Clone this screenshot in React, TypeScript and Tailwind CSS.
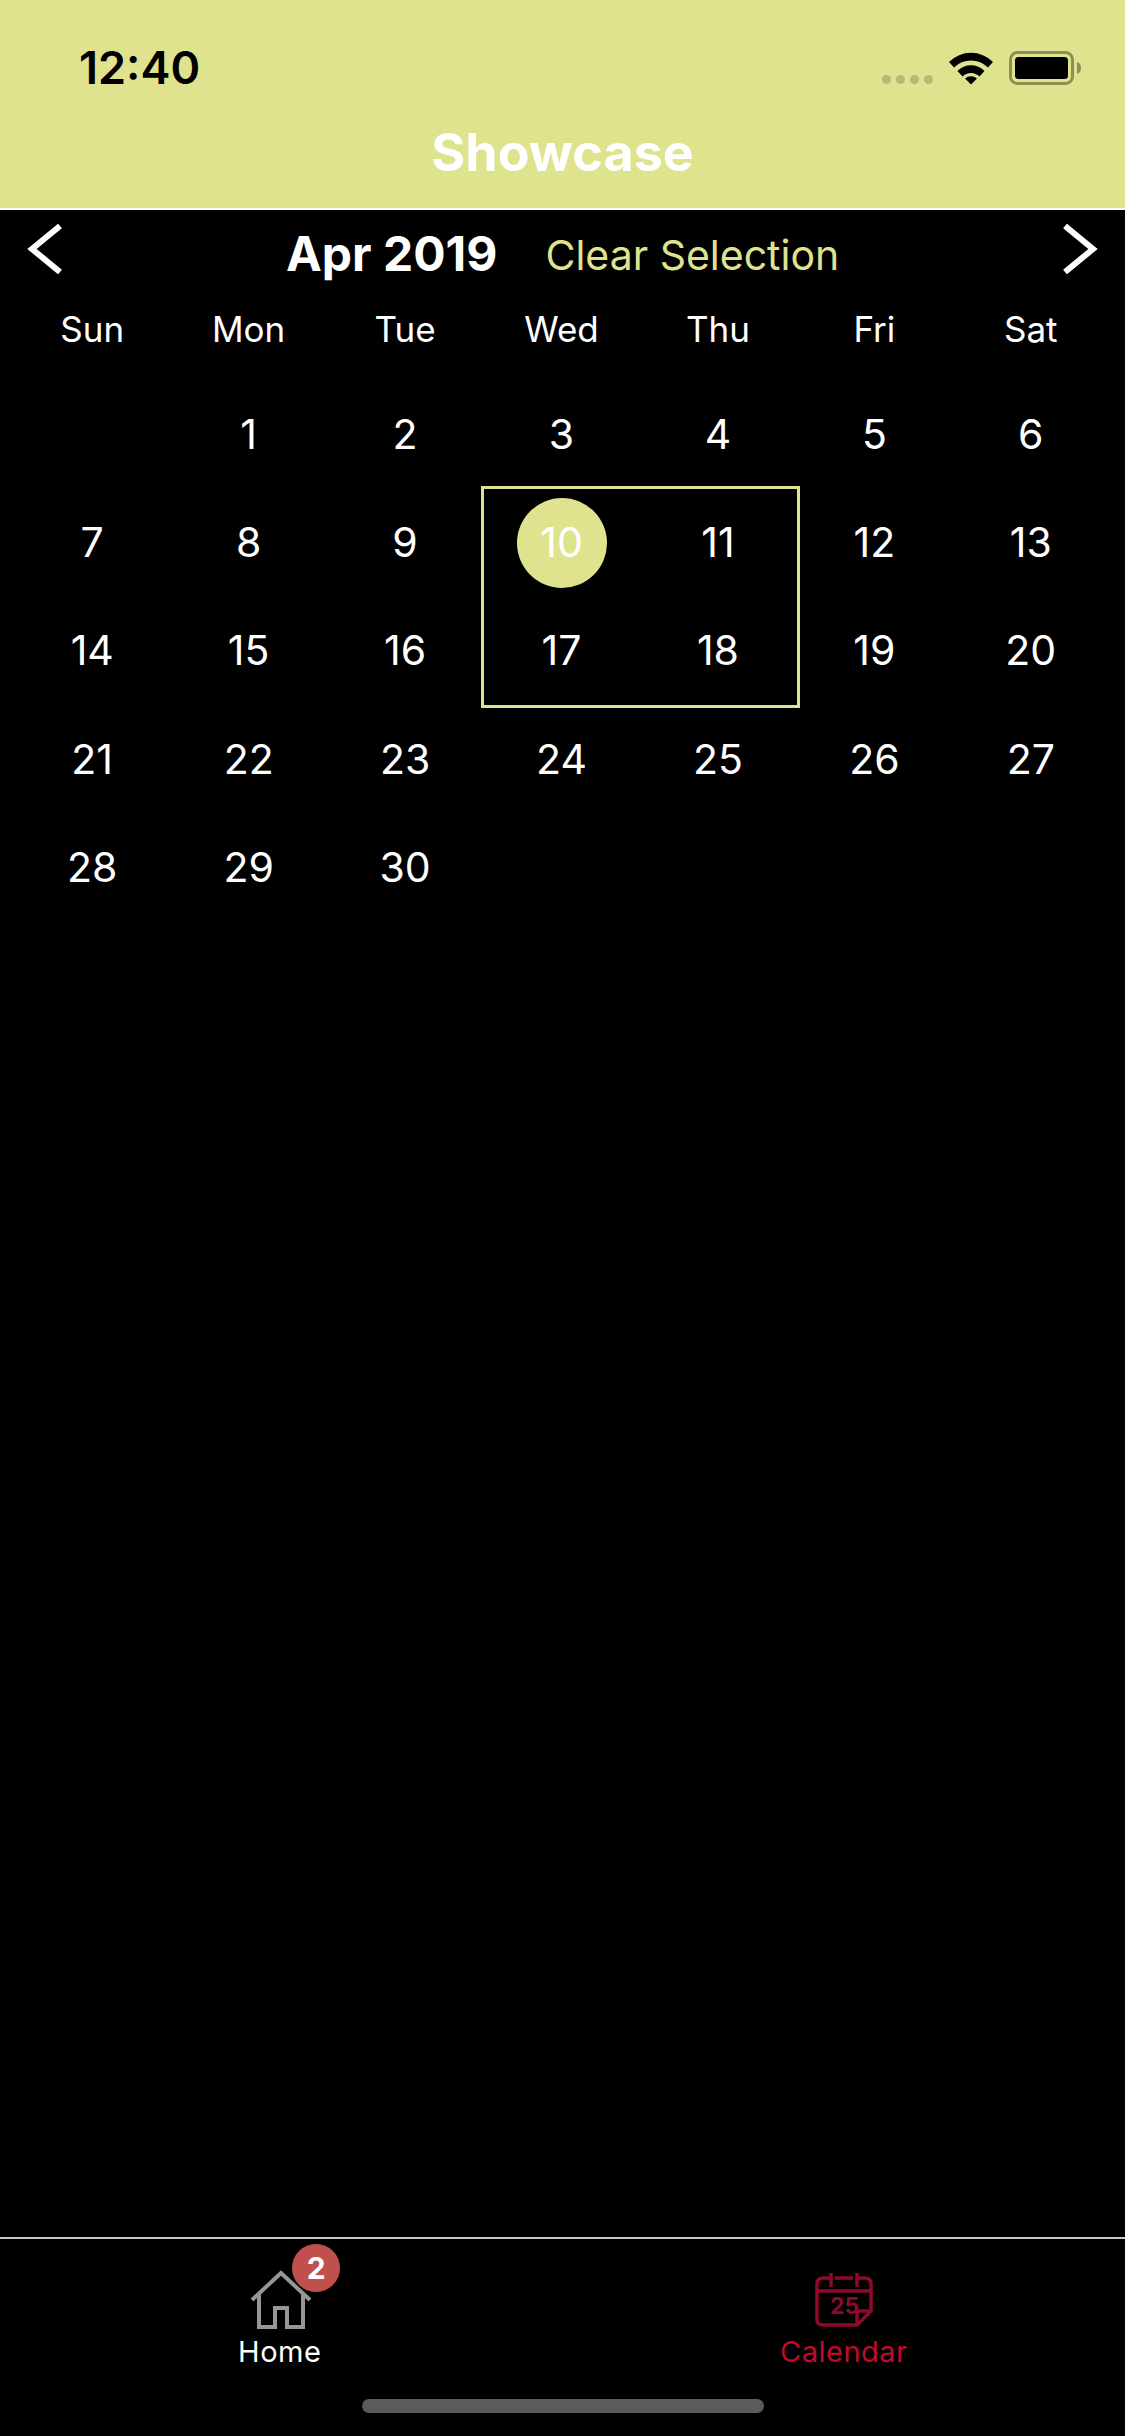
import React from "react";

const WEEKDAYS = ["Sun", "Mon", "Tue", "Wed", "Thu", "Fri", "Sat"];
const DAYS: (number | null)[] = [null, ...Array.from({ length: 30 }, (_, i) => i + 1)];

function StatusIcons() {
  return (
    <div className="flex items-end">
      <div className="flex gap-[5px] mb-[1px]">
        {[0, 1, 2, 3].map((i) => (
          <span key={i} className="w-[9px] h-[9px] rounded-full bg-[#b7b976]" />
        ))}
      </div>
      <svg width="46" height="34" viewBox="0 0 46 34" className="ml-[15px]">
        <path d="M1 11 A31 31 0 0 1 45 11 L40 16.5 A24 24 0 0 0 6 16.5 Z" fill="#000" />
        <path d="M9.5 20 A19 19 0 0 1 36.5 20 L31.5 25.5 A12 12 0 0 0 14.5 25.5 Z" fill="#000" />
        <path d="M17 27.5 A9 9 0 0 1 29 27.5 L23 33.5 Z" fill="#000" />
      </svg>
      <svg width="76" height="34" viewBox="0 0 76 34" className="ml-[15px]">
        <rect x="1.5" y="1.5" width="62" height="31" rx="7" fill="none" stroke="#8d8e58" strokeWidth="3" />
        <rect x="6" y="6" width="53" height="22" rx="3.5" fill="#000" />
        <path d="M68 11 C71 12 72 14 72 17 C72 20 71 22 68 23 Z" fill="#8d8e58" />
      </svg>
    </div>
  );
}

function HomeIcon() {
  return (
    <svg width="62" height="60" viewBox="0 0 62 60" fill="none" stroke="#969696" strokeWidth="4">
      <path d="M2 30 L31 3 L60 30" />
      <path d="M9 24 V57 H25 V38 H37 V57 H53 V24" />
    </svg>
  );
}

function CalendarIcon() {
  return (
    <svg width="58" height="56" viewBox="0 0 58 56" fill="none" stroke="#8f0a2a" strokeWidth="3.5">
      <path d="M14 6 H8 Q2 6 2 12 V48 Q2 53 8 53 H42 L56 39 V12 Q56 6 50 6 H44" />
      <path d="M20 6 H38" />
      <path d="M16 1 V15 M42 1 V15" />
      <path d="M2 19 H56" />
      <path d="M42 53 V42 Q42 39 45 39 H56" />
      <text x="15" y="42" fontSize="23" fontWeight="700" fill="#8f0a2a" stroke="none" fontFamily="Inter, sans-serif">25</text>
    </svg>
  );
}

export default function App() {
  return (
    <div className="relative w-[1125px] h-[2436px] bg-black flex flex-col font-['Inter',sans-serif] overflow-hidden">
      <header className="h-[210px] shrink-0 bg-[#dfe38e] border-b-[2px] border-white">
        <div className="flex items-center justify-between pl-[79px] pr-[40px] pt-[44px] h-[92px]">
          <span className="text-[45px] leading-[48px] font-semibold text-black">12:40</span>
          <StatusIcons />
        </div>
        <h1 className="text-center text-[52px] leading-[60px] font-bold text-white mt-[31px]">Showcase</h1>
      </header>

      <div className="relative flex items-center h-[88px] px-[26px]">
        <svg width="38" height="50" viewBox="0 0 38 50" fill="none" stroke="#fff" strokeWidth="6" className="-mt-[10px]">
          <path d="M34 2 L6 25 L34 48" />
        </svg>
        <div className="flex-1 flex items-baseline pl-[222px] mt-[1px]">
          <span className="text-[48px] leading-[56px] font-bold text-white">Apr 2019</span>
          <span className="text-[41px] leading-[56px] text-[#dfe38e] ml-[48px] -translate-y-[1px]">Clear Selection</span>
        </div>
        <svg width="38" height="50" viewBox="0 0 38 50" fill="none" stroke="#fff" strokeWidth="6" className="-mt-[10px]">
          <path d="M4 2 L32 25 L4 48" />
        </svg>
      </div>

      <div className="grid grid-cols-7 pl-[14px] pr-[16px] mt-[7px]">
        {WEEKDAYS.map((d) => (
          <div key={d} className="text-center text-[35px] leading-[48px] text-white">
            {d}
          </div>
        ))}
      </div>

      <div className="relative grid grid-cols-7 pl-[14px] pr-[16px] mt-[27px]">
        <div className="absolute left-[481px] top-[106px] w-[319px] h-[222px] border-[3px] border-[#dfe38e]" />
        {DAYS.map((d, i) => (
          <div key={i} className="relative h-[108.2px] flex items-center justify-center">
            {d === 10 && <span className="absolute w-[90px] h-[90px] rounded-full bg-[#dfe38e] translate-x-[1px] translate-y-[1px]" />}
            {d !== null && <span className="relative text-[41px] leading-[50px] text-white">{d}</span>}
          </div>
        ))}
      </div>

      <nav className="mt-auto h-[199px] shrink-0 border-t-[2px] border-[#c9c9c9] grid grid-cols-2">
        <div className="flex flex-col items-center pt-[31px]">
          <div className="relative h-[60px]">
            <HomeIcon />
            <span className="absolute left-[42px] top-[-26px] w-[48px] h-[48px] rounded-full bg-[#c0504d] flex items-center justify-center text-[30px] font-bold text-white">
              2
            </span>
          </div>
          <span className="text-[29px] leading-[36px] tracking-[0.5px] text-white mt-[4px] mr-[3px]">Home</span>
        </div>
        <div className="flex flex-col items-center pt-[33px]">
          <CalendarIcon />
          <span className="text-[29px] leading-[36px] tracking-[0.5px] text-[#c00a2d] mt-[6px]">Calendar</span>
        </div>
      </nav>
      <div className="absolute left-[362px] bottom-[23px] w-[402px] h-[14px] rounded-full bg-[#5b5b5b]" />
    </div>
  );
}
